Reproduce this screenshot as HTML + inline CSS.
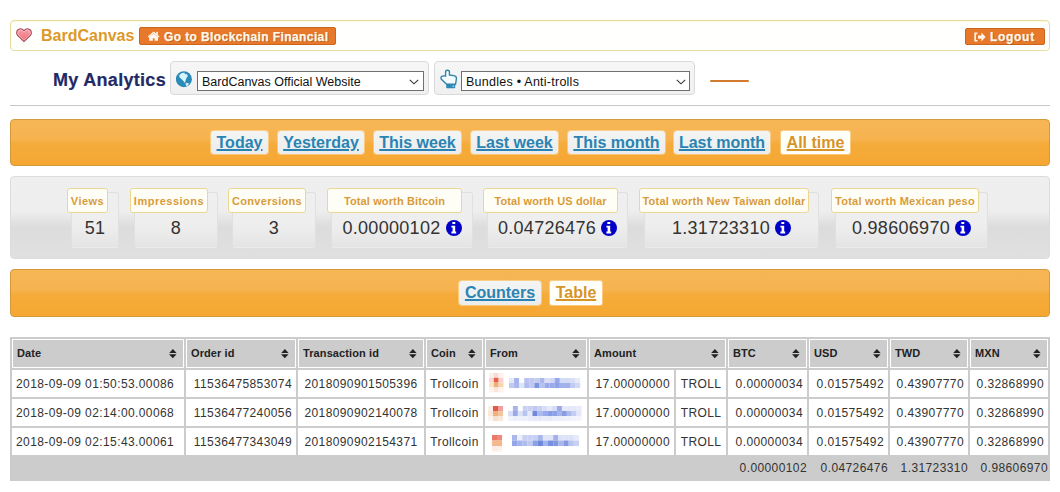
<!DOCTYPE html>
<html><head><meta charset="utf-8">
<style>
*{box-sizing:border-box;margin:0;padding:0}
html,body{width:1060px;height:492px;overflow:hidden;background:#fff;font-family:"Liberation Sans",sans-serif;color:#333}
.abs{position:absolute}
#topbar{left:10px;top:20px;width:1040px;height:31px;border:1px solid #e6dc9c;border-radius:4px;background:#fffffd;box-shadow:inset 0 1px 0 #fffbe0}
#heart{left:16px;top:28px}
#brand{left:41px;top:27px;font-size:16px;font-weight:bold;color:#dd992b;line-height:18px}
.obtn{background:#e8792a;border:1px solid #c8651e;border-radius:2px;color:#fff8ea;font-weight:bold;font-size:12px;line-height:15px;letter-spacing:0.4px;text-shadow:1px 1px 0 rgba(130,60,10,0.45);-webkit-text-stroke:0.25px #fff8ea}
#goto{left:139px;top:27px;width:197px;height:18px}
#logout{left:965px;top:28px;width:80px;height:17px}
#title{left:53px;top:69px;-webkit-text-stroke:0.2px #1f2a66;font-size:18px;font-weight:bold;color:#1f2a66;letter-spacing:0.3px;line-height:22px}
.selbox{height:34px;top:61px;border:1px solid #d9d9d9;border-radius:4px;background:linear-gradient(#f6f6f6,#f0f0f0)}
.sel{top:71px;height:20px;border:1px solid #707070;background:#fff;font-size:12.5px;line-height:20px;padding-left:4px;color:#111}
.chev{position:absolute;right:7px;top:6px;width:9px;height:6px}
#hr{left:10px;top:105px;width:1040px;height:1px;background:#c8c8c8}
#oline{left:710px;top:80px;width:39px;height:2px;background:#d27b2e;border-radius:1px}
.obox{left:10px;width:1040px;border:1px solid #d39a3c;border-radius:4px;background:linear-gradient(#f7b656 0%,#f6b34f 42%,#f5ab3a 54%,#f5a732 100%)}
.pill{top:131px;height:23px;border-radius:3px;background:linear-gradient(#f3f4f4,#ececec);box-shadow:0 0 0 1px rgba(255,236,200,0.45);font-size:16px;font-weight:bold;line-height:24px;text-align:center;color:#2a84b3}
.pill span{text-decoration:underline;text-decoration-thickness:2px;text-underline-offset:1px}
.pill.act{background:#fffffa;color:#d69429;border-radius:2px}
#gray{left:10px;top:176px;width:1040px;height:83px;border:1px solid #dcdcdc;border-radius:4px;background:linear-gradient(#efefef 0%,#eeeeee 42%,#dcdcdc 62%,#e0e0e0 100%)}
.card{top:192px;height:56px;border:1px solid #e0e0e0;border-bottom-color:rgba(224,224,224,0.3);border-radius:3px;background:linear-gradient(#efefef 0%,#eeeeee 60%,#e4e4e4 100%);text-align:center;font-size:18px;color:#333;line-height:22px;padding-top:24px;letter-spacing:0.3px}
.lab{top:188px;height:25px;border:1px solid #ebd794;border-radius:3px;background:#fffef6;font-size:11px;font-weight:bold;color:#d99b3a;text-align:center;line-height:24px;white-space:nowrap}
.info{display:inline-block;width:16px;height:16px;vertical-align:-2px;margin-left:5px}
#tbl{left:10px;top:337px;width:1040px;border-spacing:2px;border-collapse:separate;background:#cccccc;table-layout:fixed;font-size:12px;color:#333}
#tbl th{height:29px;border:1px solid #fff;background:#cccccc;text-align:left;font-size:11px;font-weight:bold;color:#222;padding:0 0 1px 4px;position:relative;white-space:nowrap;letter-spacing:0.1px}
#tbl .srt{position:absolute;right:6px;top:9px}
#tbl td{height:27px;background:#fff;border:1px solid #fff;padding:0 3px;white-space:nowrap;letter-spacing:0.4px}
#tbl td.l{text-align:left}#tbl td.r{text-align:right}#tbl td.c{text-align:center}
#tbl tr.fr td{height:22px;background:#cccccc;border:0;text-align:right;padding:0 0 0 0}
</style></head><body>
<div id="topbar" class="abs"></div>
<svg id="heart" class="abs" width="17" height="15" viewBox="0 0 17 15"><defs><linearGradient id="hg" x1="0" y1="0" x2="0" y2="1"><stop offset="0" stop-color="#f8a0a8"/><stop offset="1" stop-color="#f06a7a"/></linearGradient></defs><path d="M8 13.6 L1.8 7.6 C0.2 6 0.3 3 2 1.8 C3.8 0.4 6.4 0.8 8 2.6 C9.6 0.8 12.2 0.4 14 1.8 C15.7 3 15.8 6 14.2 7.6 Z" fill="url(#hg)" stroke="#a04c58" stroke-width="1.1"/><path d="M8 12.2 L2.6 7 C1.4 5.8 1.5 3.5 2.8 2.6 C4.2 1.6 6.3 2 7.6 3.6 L8 4 L8.4 3.6 C9.7 2 11.8 1.6 13.2 2.6 C14.5 3.5 14.6 5.8 13.4 7 Z" fill="none" stroke="#ffd8dc" stroke-width="0.7" opacity="0.8"/></svg>
<div id="brand" class="abs">BardCanvas</div>
<div id="goto" class="abs obtn"><svg style="position:absolute;left:7px;top:3px" width="14" height="11" viewBox="0 0 14 11"><path d="M0.8 5.6 L6.6 0.6 L12.6 5.6 L11.8 6.4 L6.6 2.2 L1.6 6.4 Z" fill="#fff8ee"/><rect x="9.2" y="0.8" width="1.6" height="3" fill="#fff8ee"/><path d="M2.2 6 L6.6 2.6 L11 6 L11 9.8 L7.6 9.8 L7.6 7.2 L5.8 7.2 L5.8 9.8 L2.2 9.8 Z" fill="#fff8ee"/></svg><span style="position:absolute;left:24px;top:2px">Go to Blockchain Financial</span></div>
<div id="logout" class="abs obtn"><svg style="position:absolute;left:8px;top:3px" width="13" height="11" viewBox="0 0 13 11"><path d="M0.3 0.6 L3.5 0.6 L3.5 2.2 L2 2.2 L2 8 L3.5 8 L3.5 9.6 L0.3 9.6 Z" fill="#fff4e6"/><path d="M4 3.4 L7.4 3.4 L7.4 0.6 L11.6 5.1 L7.4 9.6 L7.4 6.8 L4 6.8 Z" fill="#fff4e6"/></svg><span style="position:absolute;left:24px;top:1px;letter-spacing:0.7px">Logout</span></div>

<div id="title" class="abs">My Analytics</div>
<div class="abs selbox" style="left:170px;width:259px"></div>
<div class="abs sel" style="left:197px;width:227px">BardCanvas Official Website</div>
<div class="abs selbox" style="left:434px;width:261px"></div>
<div class="abs sel" style="left:461px;width:229px;letter-spacing:0.25px">Bundles &bull; Anti-trolls</div>
<svg class="abs" style="left:176px;top:71px" width="17" height="17" viewBox="0 0 17 17"><circle cx="7.9" cy="8.2" r="8" fill="#2b8ab8"/><path d="M3.3 4.2 C4.5 2.6 6 2 6.9 2 L8.2 1.6 L9.1 3.3 L10.9 2.9 L11.8 5.1 L10.4 7.3 C9.8 8.6 9.4 10.2 9.1 11.6 L8.6 11.8 C8 10.6 7.2 9.8 6.4 9.1 L3.7 6.4 C3.2 5.6 3.1 4.8 3.3 4.2 Z" fill="#d6f4fb"/><path d="M9.6 11.8 L13.1 12.6 L11.8 14.4 L10 14.9 Z" fill="#d6f4fb"/></svg><svg class="abs" style="left:436px;top:66px" width="26" height="26" viewBox="0 0 26 26"><path d="M9.6 10.2 L9.6 6 C9.6 4.8 10.4 4.2 11.5 4.2 C12.6 4.2 13.4 4.8 13.4 6 L13.4 9 L17.8 9.6 C19.6 9.9 20.6 11 20.4 12.6 L19.6 18.2 L10.6 18.2 L5.6 13.4 C4.6 12.4 4.8 11 5.8 10.4 C7 9.7 8.4 9.8 9.6 10.2 Z" fill="#f2fbfe" stroke="#2f82aa" stroke-width="1.35" stroke-linejoin="round"/><rect x="10.2" y="18.4" width="9" height="3.8" rx="0.8" fill="#2f89b4"/><rect x="16.6" y="19.6" width="1.3" height="1.3" fill="#bff0ff"/></svg><svg class="abs" style="left:409px;top:79px" width="10" height="6" viewBox="0 0 10 6"><path d="M0.8 0.8 L5 4.8 L9.2 0.8" fill="none" stroke="#333" stroke-width="1.1"/></svg><svg class="abs" style="left:676px;top:79px" width="10" height="6" viewBox="0 0 10 6"><path d="M0.8 0.8 L5 4.8 L9.2 0.8" fill="none" stroke="#333" stroke-width="1.1"/></svg><div id="oline" class="abs"></div>
<div id="hr" class="abs"></div>

<div class="abs obox" style="top:119px;height:47px"></div>
<div class="abs pill" style="left:211px;width:57px"><span>Today</span></div>
<div class="abs pill" style="left:278px;width:86px"><span>Yesterday</span></div>
<div class="abs pill" style="left:374px;width:87px"><span>This week</span></div>
<div class="abs pill" style="left:471px;width:87px"><span>Last week</span></div>
<div class="abs pill" style="left:568px;width:97px"><span>This month</span></div>
<div class="abs pill" style="left:674px;width:96px"><span>Last month</span></div>
<div class="abs pill act" style="left:781px;width:69px"><span>All time</span></div>

<div id="gray" class="abs"></div>
<div class="abs card" style="left:71px;width:48px">51</div>
<div class="abs lab" style="left:67px;width:41px;letter-spacing:0.5px">Views</div>
<div class="abs card" style="left:134px;width:84px">8</div>
<div class="abs lab" style="left:130px;width:78px;letter-spacing:0.5px">Impressions</div>
<div class="abs card" style="left:232px;width:84px">3</div>
<div class="abs lab" style="left:228px;width:78px;letter-spacing:0.3px">Conversions</div>
<div class="abs card" style="left:331px;width:142px">0.00000102<svg class="info" width="16" height="16" viewBox="0 0 16 16"><circle cx="8" cy="8" r="8" fill="#0000c8"/><rect x="6.3" y="2" width="3" height="2" rx="0.6" fill="#fff"/><path d="M5.4 5.8 L9.2 5.8 L9.2 11.4 L10.2 11.4 L10.2 13.4 L5.4 13.4 L5.4 11.4 L6.6 11.4 L6.6 7.6 L5.4 7.6 Z" fill="#fff"/></svg></div>
<div class="abs lab" style="left:327px;width:135px;letter-spacing:0.12px">Total worth Bitcoin</div>
<div class="abs card" style="left:487px;width:141px">0.04726476<svg class="info" width="16" height="16" viewBox="0 0 16 16"><circle cx="8" cy="8" r="8" fill="#0000c8"/><rect x="6.3" y="2" width="3" height="2" rx="0.6" fill="#fff"/><path d="M5.4 5.8 L9.2 5.8 L9.2 11.4 L10.2 11.4 L10.2 13.4 L5.4 13.4 L5.4 11.4 L6.6 11.4 L6.6 7.6 L5.4 7.6 Z" fill="#fff"/></svg></div>
<div class="abs lab" style="left:483px;width:135px;letter-spacing:0.11px">Total worth US dollar</div>
<div class="abs card" style="left:644px;width:175px">1.31723310<svg class="info" width="16" height="16" viewBox="0 0 16 16"><circle cx="8" cy="8" r="8" fill="#0000c8"/><rect x="6.3" y="2" width="3" height="2" rx="0.6" fill="#fff"/><path d="M5.4 5.8 L9.2 5.8 L9.2 11.4 L10.2 11.4 L10.2 13.4 L5.4 13.4 L5.4 11.4 L6.6 11.4 L6.6 7.6 L5.4 7.6 Z" fill="#fff"/></svg></div>
<div class="abs lab" style="left:639px;width:170px;letter-spacing:0.22px">Total worth New Taiwan dollar</div>
<div class="abs card" style="left:835px;width:153px">0.98606970<svg class="info" width="16" height="16" viewBox="0 0 16 16"><circle cx="8" cy="8" r="8" fill="#0000c8"/><rect x="6.3" y="2" width="3" height="2" rx="0.6" fill="#fff"/><path d="M5.4 5.8 L9.2 5.8 L9.2 11.4 L10.2 11.4 L10.2 13.4 L5.4 13.4 L5.4 11.4 L6.6 11.4 L6.6 7.6 L5.4 7.6 Z" fill="#fff"/></svg></div>
<div class="abs lab" style="left:831px;width:148px;letter-spacing:0.26px">Total worth Mexican peso</div>

<div class="abs obox" style="top:269px;height:48px"></div>
<div class="abs pill" style="left:459px;top:281px;height:24px;width:82px"><span>Counters</span></div>
<div class="abs pill act" style="left:550px;top:281px;height:24px;width:52px"><span>Table</span></div>

<table id="tbl" class="abs"><colgroup><col style="width:172px"><col style="width:110px"><col style="width:126px"><col style="width:57px"><col style="width:102px"><col style="width:85px"><col style="width:50px"><col style="width:79px"><col style="width:79px"><col style="width:78px"><col style="width:78px"></colgroup>
<tr class="hr"><th>Date<svg class="srt" width="8" height="10" viewBox="0 0 8 10"><path d="M0.2 4 L7.6 4 L3.9 0 Z M0 5.2 L7.6 5.2 L3.8 9.2 Z" fill="#222"/></svg></th><th>Order id<svg class="srt" width="8" height="10" viewBox="0 0 8 10"><path d="M0.2 4 L7.6 4 L3.9 0 Z M0 5.2 L7.6 5.2 L3.8 9.2 Z" fill="#222"/></svg></th><th>Transaction id<svg class="srt" width="8" height="10" viewBox="0 0 8 10"><path d="M0.2 4 L7.6 4 L3.9 0 Z M0 5.2 L7.6 5.2 L3.8 9.2 Z" fill="#222"/></svg></th><th>Coin<svg class="srt" width="8" height="10" viewBox="0 0 8 10"><path d="M0.2 4 L7.6 4 L3.9 0 Z M0 5.2 L7.6 5.2 L3.8 9.2 Z" fill="#222"/></svg></th><th>From<svg class="srt" width="8" height="10" viewBox="0 0 8 10"><path d="M0.2 4 L7.6 4 L3.9 0 Z M0 5.2 L7.6 5.2 L3.8 9.2 Z" fill="#222"/></svg></th><th colspan=2>Amount<svg class="srt" width="8" height="10" viewBox="0 0 8 10"><path d="M0.2 4 L7.6 4 L3.9 0 Z M0 5.2 L7.6 5.2 L3.8 9.2 Z" fill="#222"/></svg></th><th>BTC<svg class="srt" width="8" height="10" viewBox="0 0 8 10"><path d="M0.2 4 L7.6 4 L3.9 0 Z M0 5.2 L7.6 5.2 L3.8 9.2 Z" fill="#222"/></svg></th><th>USD<svg class="srt" width="8" height="10" viewBox="0 0 8 10"><path d="M0.2 4 L7.6 4 L3.9 0 Z M0 5.2 L7.6 5.2 L3.8 9.2 Z" fill="#222"/></svg></th><th>TWD<svg class="srt" width="8" height="10" viewBox="0 0 8 10"><path d="M0.2 4 L7.6 4 L3.9 0 Z M0 5.2 L7.6 5.2 L3.8 9.2 Z" fill="#222"/></svg></th><th>MXN<svg class="srt" width="8" height="10" viewBox="0 0 8 10"><path d="M0.2 4 L7.6 4 L3.9 0 Z M0 5.2 L7.6 5.2 L3.8 9.2 Z" fill="#222"/></svg></th></tr>
<tr class="dr"><td class="l">2018-09-09 01:50:53.00086</td><td class="r">11536475853074</td><td class="c">2018090901505396</td><td class="c">Trollcoin</td><td></td><td class="r">17.00000000</td><td class="c">TROLL</td><td class="r">0.00000034</td><td class="r">0.01575492</td><td class="r">0.43907770</td><td class="r">0.32868990</td></tr>
<tr class="dr"><td class="l">2018-09-09 02:14:00.00068</td><td class="r">11536477240056</td><td class="c">2018090902140078</td><td class="c">Trollcoin</td><td></td><td class="r">17.00000000</td><td class="c">TROLL</td><td class="r">0.00000034</td><td class="r">0.01575492</td><td class="r">0.43907770</td><td class="r">0.32868990</td></tr>
<tr class="dr"><td class="l">2018-09-09 02:15:43.00061</td><td class="r">11536477343049</td><td class="c">2018090902154371</td><td class="c">Trollcoin</td><td></td><td class="r">17.00000000</td><td class="c">TROLL</td><td class="r">0.00000034</td><td class="r">0.01575492</td><td class="r">0.43907770</td><td class="r">0.32868990</td></tr>
<tr class="fr"><td colspan=7></td><td>0.00000102</td><td>0.04726476</td><td>1.31723310</td><td>0.98606970</td></tr>
</table>
<svg class="abs" style="left:0;top:0;filter:blur(0.6px)" width="1060" height="492" viewBox="0 0 1060 492"><rect x="489.00" y="373.00" width="4.85" height="4.85" fill="#fbeeee"/><rect x="493.80" y="373.00" width="4.85" height="4.85" fill="#f6dcd4"/><rect x="498.60" y="373.00" width="4.85" height="4.85" fill="#fdf2f0"/><rect x="489.00" y="377.80" width="4.85" height="4.85" fill="#fad8d8"/><rect x="493.80" y="377.80" width="4.85" height="4.85" fill="#e8604a"/><rect x="498.60" y="377.80" width="4.85" height="4.85" fill="#fbd0d0"/><rect x="489.00" y="382.60" width="4.85" height="4.85" fill="#fde4c8"/><rect x="493.80" y="382.60" width="4.85" height="4.85" fill="#eeb07a"/><rect x="498.60" y="382.60" width="4.85" height="4.85" fill="#fbd5b0"/><rect x="489.00" y="387.40" width="4.85" height="4.85" fill="#fdf3ec"/><rect x="493.80" y="387.40" width="4.85" height="4.85" fill="#f8e6dc"/><rect x="498.60" y="387.40" width="4.85" height="4.85" fill="#fdf3ec"/><rect x="509.00" y="378.00" width="5.13" height="5.05" fill="#e4e8f8"/><rect x="514.08" y="378.00" width="5.13" height="5.05" fill="#a6b4ec"/><rect x="519.16" y="378.00" width="5.13" height="5.05" fill="#fafbff"/><rect x="524.24" y="378.00" width="5.13" height="5.05" fill="#b8c2f0"/><rect x="529.32" y="378.00" width="5.13" height="5.05" fill="#c0c8f2"/><rect x="534.40" y="378.00" width="5.13" height="5.05" fill="#c4ccf2"/><rect x="539.48" y="378.00" width="5.13" height="5.05" fill="#acb8ec"/><rect x="544.56" y="378.00" width="5.13" height="5.05" fill="#d8def8"/><rect x="549.64" y="378.00" width="5.13" height="5.05" fill="#d0d8f6"/><rect x="554.72" y="378.00" width="5.13" height="5.05" fill="#98a8e8"/><rect x="559.80" y="378.00" width="5.13" height="5.05" fill="#d4dbf6"/><rect x="564.88" y="378.00" width="5.13" height="5.05" fill="#d4dbf6"/><rect x="569.96" y="378.00" width="5.13" height="5.05" fill="#d8def8"/><rect x="575.04" y="378.00" width="5.13" height="5.05" fill="#e8ecfa"/><rect x="509.00" y="383.00" width="5.13" height="5.05" fill="#c0caf0"/><rect x="514.08" y="383.00" width="5.13" height="5.05" fill="#aab6ec"/><rect x="519.16" y="383.00" width="5.13" height="5.05" fill="#dde3f8"/><rect x="524.24" y="383.00" width="5.13" height="5.05" fill="#b0bcee"/><rect x="529.32" y="383.00" width="5.13" height="5.05" fill="#c0c8f2"/><rect x="534.40" y="383.00" width="5.13" height="5.05" fill="#7c96e0"/><rect x="539.48" y="383.00" width="5.13" height="5.05" fill="#b8c2f0"/><rect x="544.56" y="383.00" width="5.13" height="5.05" fill="#98aaea"/><rect x="549.64" y="383.00" width="5.13" height="5.05" fill="#98aaea"/><rect x="554.72" y="383.00" width="5.13" height="5.05" fill="#8fa2e8"/><rect x="559.80" y="383.00" width="5.13" height="5.05" fill="#a0b0ea"/><rect x="564.88" y="383.00" width="5.13" height="5.05" fill="#a0b0ea"/><rect x="569.96" y="383.00" width="5.13" height="5.05" fill="#c0caf2"/><rect x="575.04" y="383.00" width="5.13" height="5.05" fill="#d0d8f6"/><rect x="488.00" y="406.00" width="5.05" height="5.05" fill="#fcefe8"/><rect x="493.00" y="406.00" width="5.05" height="5.05" fill="#e05a48"/><rect x="498.00" y="406.00" width="5.05" height="5.05" fill="#f0a0a0"/><rect x="488.00" y="411.00" width="5.05" height="5.05" fill="#fce8d8"/><rect x="493.00" y="411.00" width="5.05" height="5.05" fill="#f0b080"/><rect x="498.00" y="411.00" width="5.05" height="5.05" fill="#f0c8a0"/><rect x="488.00" y="416.00" width="5.05" height="5.05" fill="#fdf4ee"/><rect x="493.00" y="416.00" width="5.05" height="5.05" fill="#f6e0d0"/><rect x="498.00" y="416.00" width="5.05" height="5.05" fill="#f8e8dc"/><rect x="512.90" y="406.00" width="4.95" height="5.05" fill="#a8b4ec"/><rect x="522.70" y="406.00" width="4.95" height="5.05" fill="#c8d0f4"/><rect x="527.60" y="406.00" width="4.95" height="5.05" fill="#c8d0f4"/><rect x="532.50" y="406.00" width="4.95" height="5.05" fill="#c0c8f2"/><rect x="537.40" y="406.00" width="4.95" height="5.05" fill="#c8d0f4"/><rect x="542.30" y="406.00" width="4.95" height="5.05" fill="#d8def8"/><rect x="547.20" y="406.00" width="4.95" height="5.05" fill="#e4e8fa"/><rect x="552.10" y="406.00" width="4.95" height="5.05" fill="#d4dbf6"/><rect x="557.00" y="406.00" width="4.95" height="5.05" fill="#9aa8e8"/><rect x="561.90" y="406.00" width="4.95" height="5.05" fill="#e4e8fa"/><rect x="566.80" y="406.00" width="4.95" height="5.05" fill="#e4e8fa"/><rect x="571.70" y="406.00" width="4.95" height="5.05" fill="#e4e8fa"/><rect x="576.60" y="406.00" width="4.95" height="5.05" fill="#e8ecfa"/><rect x="508.00" y="411.00" width="4.95" height="5.05" fill="#d8def8"/><rect x="512.90" y="411.00" width="4.95" height="5.05" fill="#98a8e8"/><rect x="517.80" y="411.00" width="4.95" height="5.05" fill="#d8e2f4"/><rect x="522.70" y="411.00" width="4.95" height="5.05" fill="#b8c4f0"/><rect x="527.60" y="411.00" width="4.95" height="5.05" fill="#e4e8fa"/><rect x="532.50" y="411.00" width="4.95" height="5.05" fill="#6f88dc"/><rect x="537.40" y="411.00" width="4.95" height="5.05" fill="#a8baee"/><rect x="542.30" y="411.00" width="4.95" height="5.05" fill="#98a8e8"/><rect x="547.20" y="411.00" width="4.95" height="5.05" fill="#889ce4"/><rect x="552.10" y="411.00" width="4.95" height="5.05" fill="#8ea0e6"/><rect x="557.00" y="411.00" width="4.95" height="5.05" fill="#a4b4ec"/><rect x="561.90" y="411.00" width="4.95" height="5.05" fill="#8c9ce0"/><rect x="566.80" y="411.00" width="4.95" height="5.05" fill="#a8bcee"/><rect x="571.70" y="411.00" width="4.95" height="5.05" fill="#c4cef2"/><rect x="576.60" y="411.00" width="4.95" height="5.05" fill="#e4e8fa"/><rect x="508.00" y="416.00" width="4.95" height="5.05" fill="#f2f4fb"/><rect x="512.90" y="416.00" width="4.95" height="5.05" fill="#eceff9"/><rect x="517.80" y="416.00" width="4.95" height="5.05" fill="#eef1fa"/><rect x="522.70" y="416.00" width="4.95" height="5.05" fill="#eceff9"/><rect x="527.60" y="416.00" width="4.95" height="5.05" fill="#e8ecf9"/><rect x="532.50" y="416.00" width="4.95" height="5.05" fill="#e4e8f8"/><rect x="537.40" y="416.00" width="4.95" height="5.05" fill="#e4e8f8"/><rect x="542.30" y="416.00" width="4.95" height="5.05" fill="#e8ecf9"/><rect x="547.20" y="416.00" width="4.95" height="5.05" fill="#e6eaf8"/><rect x="552.10" y="416.00" width="4.95" height="5.05" fill="#eceff9"/><rect x="557.00" y="416.00" width="4.95" height="5.05" fill="#eceff9"/><rect x="561.90" y="416.00" width="4.95" height="5.05" fill="#eef1fa"/><rect x="566.80" y="416.00" width="4.95" height="5.05" fill="#f0f2fb"/><rect x="571.70" y="416.00" width="4.95" height="5.05" fill="#f2f4fb"/><rect x="576.60" y="416.00" width="4.95" height="5.05" fill="#f4f5fc"/><rect x="492.00" y="435.00" width="5.05" height="5.55" fill="#ec7a68"/><rect x="497.00" y="435.00" width="5.05" height="5.55" fill="#ee8a78"/><rect x="492.00" y="440.50" width="5.05" height="5.55" fill="#f5b890"/><rect x="497.00" y="440.50" width="5.05" height="5.55" fill="#f2b888"/><rect x="492.00" y="446.00" width="5.05" height="5.55" fill="#fbeee6"/><rect x="497.00" y="446.00" width="5.05" height="5.55" fill="#fbf0ea"/><rect x="512.00" y="435.00" width="5.20" height="5.55" fill="#a8b8ec"/><rect x="517.15" y="435.00" width="5.20" height="5.55" fill="#eef0fb"/><rect x="522.30" y="435.00" width="5.20" height="5.55" fill="#c8d0f4"/><rect x="527.45" y="435.00" width="5.20" height="5.55" fill="#c8d0f4"/><rect x="532.60" y="435.00" width="5.20" height="5.55" fill="#c8d0f4"/><rect x="537.75" y="435.00" width="5.20" height="5.55" fill="#a8b8ec"/><rect x="542.90" y="435.00" width="5.20" height="5.55" fill="#e0e6f8"/><rect x="548.05" y="435.00" width="5.20" height="5.55" fill="#dfe4f8"/><rect x="553.20" y="435.00" width="5.20" height="5.55" fill="#a4b0ea"/><rect x="558.35" y="435.00" width="5.20" height="5.55" fill="#dce2f8"/><rect x="563.50" y="435.00" width="5.20" height="5.55" fill="#dce2f8"/><rect x="568.65" y="435.00" width="5.20" height="5.55" fill="#dce2f8"/><rect x="573.80" y="435.00" width="5.20" height="5.55" fill="#e6eaf9"/><rect x="512.00" y="440.50" width="5.20" height="5.55" fill="#94a6e8"/><rect x="517.15" y="440.50" width="5.20" height="5.55" fill="#a4b4ec"/><rect x="522.30" y="440.50" width="5.20" height="5.55" fill="#b0bcee"/><rect x="527.45" y="440.50" width="5.20" height="5.55" fill="#c0c8f2"/><rect x="532.60" y="440.50" width="5.20" height="5.55" fill="#8ca0e4"/><rect x="537.75" y="440.50" width="5.20" height="5.55" fill="#6e88dc"/><rect x="542.90" y="440.50" width="5.20" height="5.55" fill="#a4b4ec"/><rect x="548.05" y="440.50" width="5.20" height="5.55" fill="#7890e0"/><rect x="553.20" y="440.50" width="5.20" height="5.55" fill="#8098e2"/><rect x="558.35" y="440.50" width="5.20" height="5.55" fill="#a8b8ec"/><rect x="563.50" y="440.50" width="5.20" height="5.55" fill="#8898e2"/><rect x="568.65" y="440.50" width="5.20" height="5.55" fill="#b8c4f0"/><rect x="573.80" y="440.50" width="5.20" height="5.55" fill="#c8d0f4"/></svg>
</body></html>
